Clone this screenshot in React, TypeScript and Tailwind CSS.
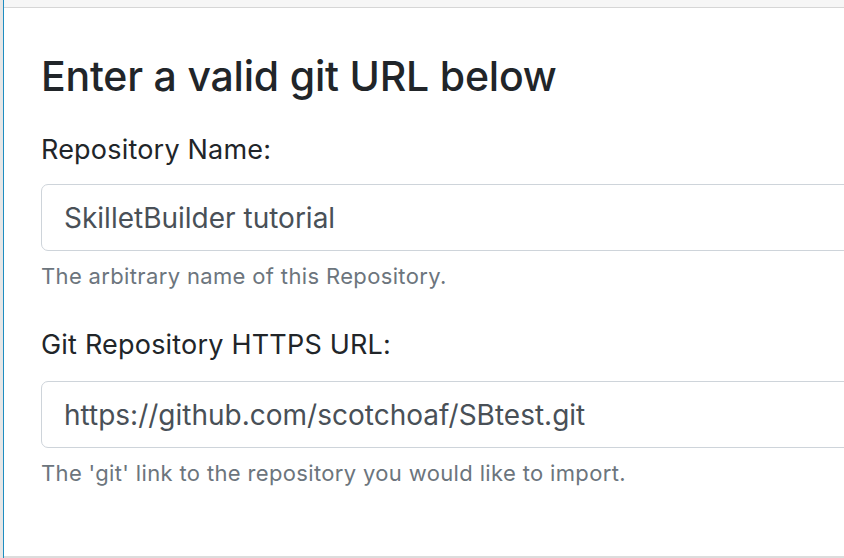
export default function App() {
  return (
    <div className="flex h-[558px] w-[844px] overflow-hidden bg-white font-['Inter','Noto_Sans',sans-serif]">
      {/* left edge */}
      <div className="w-[3px] shrink-0 bg-[#e6e6e6]" />
      <div className="w-px shrink-0 bg-[#1f8dc1]" />

      <div className="flex min-w-0 flex-1 flex-col">
        <div className="h-[8px] shrink-0 border-b border-[#d6d6d6] bg-[#f6f6f6]" />

        <div className="flex-1 border-b-2 border-[#dcdcdc] pl-[37px] pt-[44px]">
          <h3 className="text-[41px] font-medium leading-[48px] tracking-[-0.2px] text-[#212529]">
            Enter a valid git URL below
          </h3>

          <div className="mt-[32px]">
            <label className="block text-[27px] leading-[36px] tracking-[0.2px] text-[#212529]">Repository Name:</label>
            <div className="mt-[16px] flex h-[67px] w-[820px] items-center rounded-[7px] border border-[#ced4da] px-[22px] text-[28px] text-[#495057]">
              SkilletBuilder tutorial
            </div>
            <p className="mt-[10px] text-[22px] leading-[30px] tracking-[0.35px] text-[#6c757d]">The arbitrary name of this Repository.</p>
          </div>

          <div className="mt-[36px]">
            <label className="block text-[27px] leading-[36px] tracking-[0.2px] text-[#212529]">Git Repository HTTPS URL:</label>
            <div className="mt-[18px] flex h-[67px] w-[820px] items-center rounded-[7px] border border-[#ced4da] px-[22px] text-[28px] text-[#495057]">
              https://github.com/scotchoaf/SBtest.git
            </div>
            <p className="mt-[10px] text-[22px] leading-[30px] tracking-[0.35px] text-[#6c757d]">The 'git' link to the repository you would like to import.</p>
          </div>
        </div>
      </div>
    </div>
  );
}
